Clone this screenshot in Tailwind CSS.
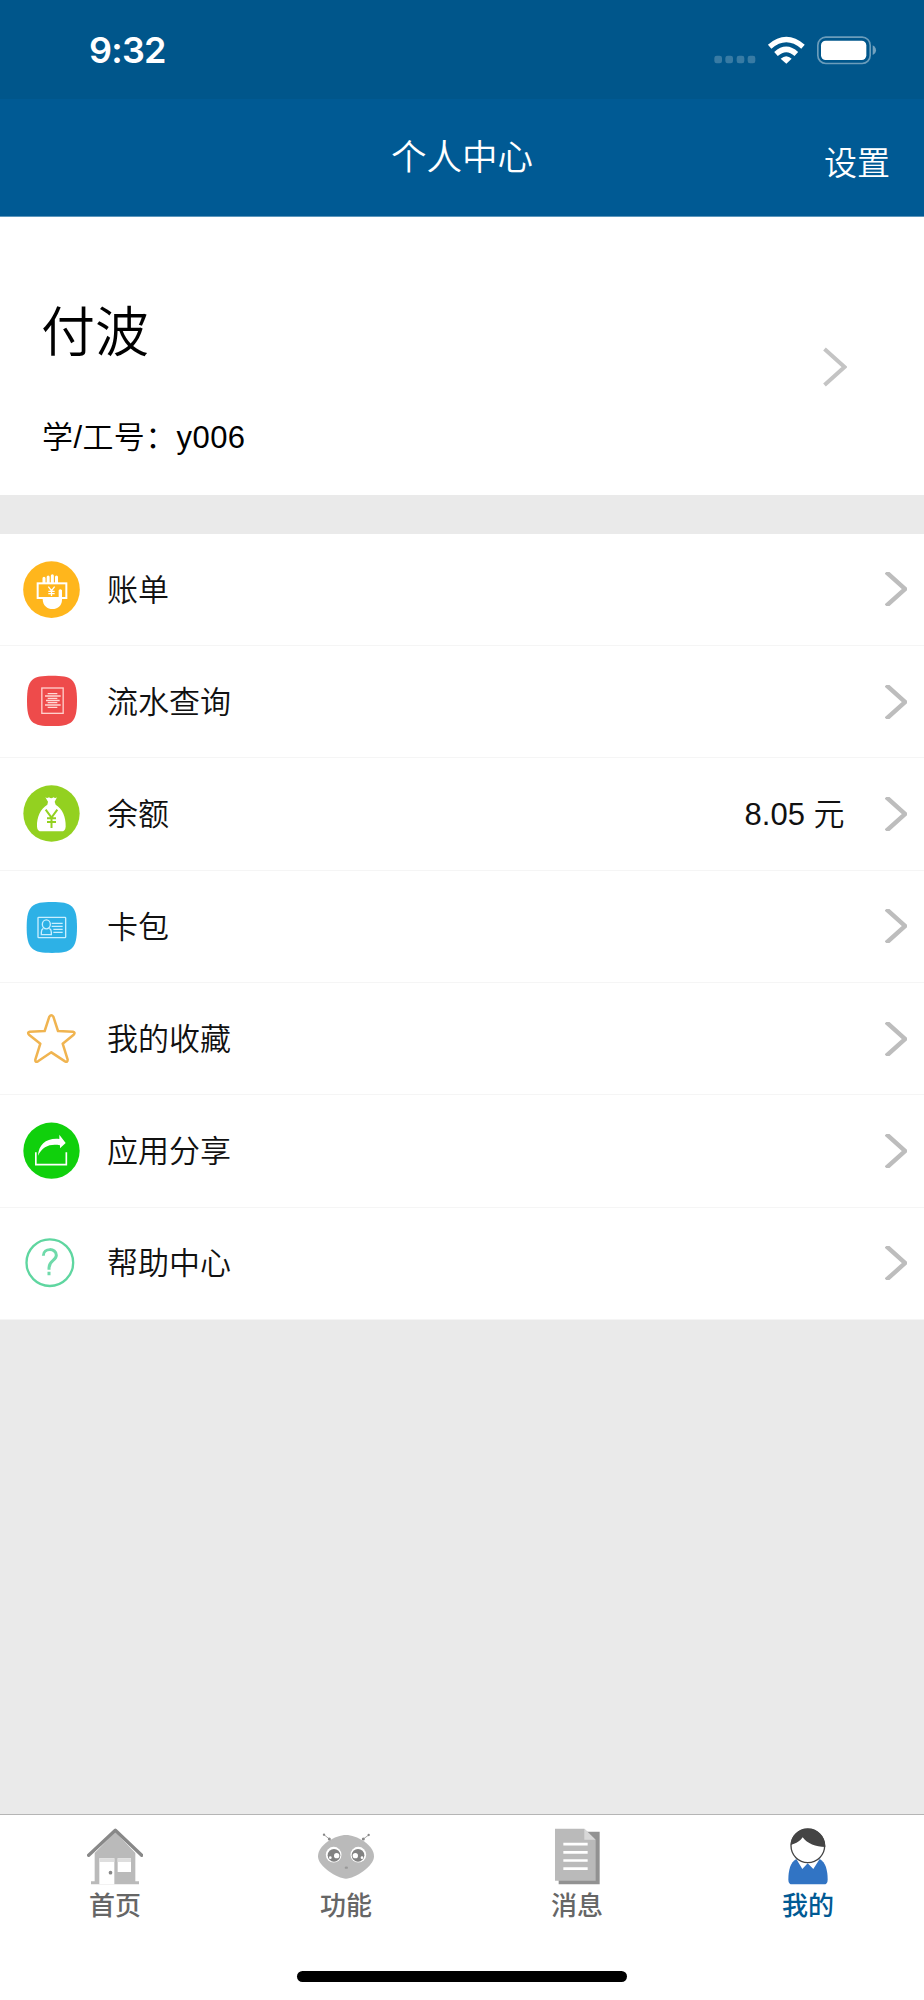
<!DOCTYPE html>
<html lang="zh-CN">
<head>
<meta charset="utf-8">
<title>个人中心</title>
<script src="https://cdn.jsdelivr.net/npm/@tailwindcss/browser@4"></script>
</head>
<body class="w-[924px] h-[2000px] flex flex-col overflow-hidden bg-[#eaeaea] text-black font-['Liberation_Sans','Noto_Sans_CJK_SC',sans-serif]">

<div class="h-[99px] shrink-0 bg-[#00568b] flex items-center pl-[89px] pr-[47px] pt-px justify-between">
  <span class="font-['Inter',sans-serif] font-semibold text-[36px] tracking-[-0.8px] leading-none text-white">9:32</span>
  <svg class="w-[164px] h-[30px]" viewBox="68 45 492 90">
    <g fill="#fff" fill-opacity=".22"><rect x="72" y="107" width="23" height="23" rx="7"/><rect x="105" y="107" width="23" height="23" rx="7"/><rect x="139" y="107" width="23" height="23" rx="7"/><rect x="172" y="107" width="23" height="23" rx="7"/></g>
    <g fill="none" stroke="#fff" stroke-width="16"><path d="M238 80Q288 37 338 80"/><path d="M257 102Q288 74 318 102"/></g>
    <path d="M271 116Q288 101 304 116L288 131Z" fill="#fff"/>
    <rect x="382.500" y="51.500" width="157" height="79" rx="24" fill="none" stroke="#fff" stroke-opacity=".42" stroke-width="5"/>
    <rect x="392" y="62" width="136" height="58" rx="14" fill="#fff"/>
    <path d="M547 76Q557 82 557 91T547 105Z" fill="#fff" fill-opacity=".45"/>
  </svg>
</div>

<header class="h-[118px] shrink-0 bg-[#005a94] border-b border-[#5c96bb] text-white grid grid-cols-3 items-center">
  <span></span>
  <h1 class="text-center text-[35.500px] leading-none font-[350] pt-[2px]">个人中心</h1>
  <span class="text-right text-[33px] leading-none font-[350] pr-[34px] pt-[11px]">设置</span>
</header>

<section class="h-[278px] shrink-0 bg-white flex items-center justify-between pl-[41px] pr-[77px]">
  <div class="flex flex-col gap-[62px] pt-[47px]">
    <h2 class="text-[54px] leading-none font-[350]">付波</h2>
    <p class="text-[31px] leading-none pl-px tracking-[0.4px] font-[350]">学/工号：y006</p>
  </div>
  <svg class="w-[24px] h-[40px] mt-[21px]" viewBox="0 0 24 40"><path d="M1.500 2L21.500 20L1.500 38" fill="none" stroke="#c4c4c4" stroke-width="4"/></svg>
</section>

<ul class="mt-[38.600px] shrink-0 bg-white text-[31px] leading-none font-[350] text-[#111]">
  <li class="h-[112.330px] border-b border-[#f5f5f5] flex items-center pl-[23px] pr-[17px]">
    <svg class="w-[57px] h-[57px] mr-[27px]" viewBox="69 62 171 171">
      <circle cx="154.500" cy="148" r="85" fill="#ffb61c"/>
      <path d="M132 114V130M144.500 110V130M157 106V130M169.500 110V130" stroke="#fff" stroke-width="9" stroke-linecap="round"/>
      <rect x="113" y="129" width="86" height="44" fill="#ffb61c" stroke="#fff" stroke-width="6"/>
      <path d="M128 173H176V150Q181 143 186 150V178C186 216 128 216 128 176Z" fill="#fff"/>
      <path d="M145 139L154.500 151L164 139M154.500 151V167M145 153H164M145 160H164" fill="none" stroke="#fff" stroke-width="4"/>
    </svg>
    <span class="flex-1 pt-[2px]">账单</span>
    <svg class="w-[22px] h-[34px]" viewBox="0 0 22 34"><path d="M0 0L19 17L0 34" transform="translate(1.200 0)" fill="none" stroke="#bdbdbd" stroke-width="4.400"/></svg>
  </li>
  <li class="h-[112.330px] border-b border-[#f5f5f5] flex items-center pl-[23px] pr-[17px]">
    <svg class="w-[57px] h-[57px] mr-[27px]" viewBox="69 399 171 171">
      <path d="M156 407C215 407 231 416 231 482S215 558 156 558S81 548 81 482S97 407 156 407Z" fill="#ee4b4b"/>
      <rect x="125.500" y="444" width="64" height="76" fill="none" stroke="#ffd0cc" stroke-width="4"/>
      <path d="M143 461H172M135 468H182M143 475H172M138 481.500H179M143 488H172M135 495H182M143 502H172" stroke="#ffd9d5" stroke-width="4"/>
    </svg>
    <span class="flex-1 pt-[2px]">流水查询</span>
    <svg class="w-[22px] h-[34px]" viewBox="0 0 22 34"><path d="M0 0L19 17L0 34" transform="translate(1.200 0)" fill="none" stroke="#bdbdbd" stroke-width="4.400"/></svg>
  </li>
  <li class="h-[112.330px] border-b border-[#f5f5f5] flex items-center pl-[23px] pr-[17px]">
    <svg class="w-[57px] h-[57px] mr-[27px]" viewBox="69 76 171 171">
      <circle cx="154.500" cy="161.500" r="84.500" fill="#93d120"/>
      <path d="M136 113Q141 117 147 113Q154 119 160 113Q166 117 171 113L164 126L167 135C187 147 198 171 197 201Q196 215 184 215H124Q112 215 111 201C110 171 122 147 142 135L144 126Z" fill="#fff"/>
      <path d="M137 150L154.500 174L172 150M154.500 173V205M141 176H168M141 187H168" fill="none" stroke="#93d120" stroke-width="6"/>
    </svg>
    <span class="flex-1 pt-[2px]">余额</span>
    <span class="mr-[40.500px] pt-[2px]">8.05 元</span>
    <svg class="w-[22px] h-[34px]" viewBox="0 0 22 34"><path d="M0 0L19 17L0 34" transform="translate(1.200 0)" fill="none" stroke="#bdbdbd" stroke-width="4.400"/></svg>
  </li>
  <li class="h-[112.330px] border-b border-[#f5f5f5] flex items-center pl-[23px] pr-[17px]">
    <svg class="w-[57px] h-[57px] mr-[27px]" viewBox="69 413 171 171">
      <path d="M156 425C215 425 231 435 231 501S215 578 156 578S80 567 80 501S97 425 156 425Z" fill="#2db1e6"/>
      <g fill="none" stroke="#c9efff" stroke-width="4"><rect x="114" y="471" width="83" height="61" rx="2"/>
      <ellipse cx="139" cy="492" rx="12" ry="13.500"/><path d="M130 504Q124 507 124 516V523H154V516Q154 507 148 504"/><path d="M155 489H188M155 498H188M160 507H188M160 516H188"/></g>
    </svg>
    <span class="flex-1 pt-[2px]">卡包</span>
    <svg class="w-[22px] h-[34px]" viewBox="0 0 22 34"><path d="M0 0L19 17L0 34" transform="translate(1.200 0)" fill="none" stroke="#bdbdbd" stroke-width="4.400"/></svg>
  </li>
  <li class="h-[112.330px] border-b border-[#f5f5f5] flex items-center pl-[23px] pr-[17px]">
    <svg class="w-[57px] h-[57px] mr-[27px]" viewBox="69 90 171 171">
      <path d="M148 110Q154 102 160 110L174 153L219 155Q227 157 221 164L188 191L203 239Q203 248 195 244L154 217L114 244Q105 248 106 239L121 191L87 164Q81 157 89 155L134 153Z" fill="none" stroke="#f0b450" stroke-width="7.500" stroke-linejoin="round"/>
    </svg>
    <span class="flex-1 pt-[2px]">我的收藏</span>
    <svg class="w-[22px] h-[34px]" viewBox="0 0 22 34"><path d="M0 0L19 17L0 34" transform="translate(1.200 0)" fill="none" stroke="#bdbdbd" stroke-width="4.400"/></svg>
  </li>
  <li class="h-[112.330px] border-b border-[#f5f5f5] flex items-center pl-[23px] pr-[17px]">
    <svg class="w-[57px] h-[57px] mr-[27px]" viewBox="69 427 171 171">
      <circle cx="154.500" cy="513" r="84.500" fill="#10d00c"/>
      <path d="M107.500 518V555H199V518" fill="none" stroke="#fff" stroke-width="5"/>
      <path d="M114 528C116 494 140 474 178 478V465L197 490L180 506V497C150 492 128 500 114 528Z" fill="#fff"/>
    </svg>
    <span class="flex-1 pt-[2px]">应用分享</span>
    <svg class="w-[22px] h-[34px]" viewBox="0 0 22 34"><path d="M0 0L19 17L0 34" transform="translate(1.200 0)" fill="none" stroke="#bdbdbd" stroke-width="4.400"/></svg>
  </li>
  <li class="h-[112.330px] border-b border-[#f5f5f5] flex items-center pl-[23px] pr-[17px]">
    <svg class="w-[57px] h-[57px] mr-[27px]" viewBox="69 764 171 171">
      <circle cx="149.500" cy="847" r="70" fill="none" stroke="#5fd6a0" stroke-width="7"/>
      <path d="M130 826C130 802 169 802 169 825C169 841 147 840 147 862V868M147 874V885" fill="none" stroke="#6fdaaa" stroke-width="9"/>
    </svg>
    <span class="flex-1 pt-px">帮助中心</span>
    <svg class="w-[22px] h-[34px]" viewBox="0 0 22 34"><path d="M0 0L19 17L0 34" transform="translate(1.200 0)" fill="none" stroke="#bdbdbd" stroke-width="4.400"/></svg>
  </li>
</ul>

<footer class="mt-auto h-[186px] shrink-0 bg-white border-t border-[#b5b5b5] flex flex-col justify-between items-center pb-[18px]">
  <nav class="w-full grid grid-cols-4 justify-items-center pt-[13px] text-[26px] leading-none font-medium text-[#666]">
    <a class="flex flex-col items-center gap-[8px] pr-px">
      <svg class="w-[56px] h-[57px]" viewBox="83 85 168 171">
        <path d="M106 160L168 97L228 160V245H239V254H95V245H106Z" fill="#bababa"/>
        <path d="M120 176H165V254H120ZM175 176H215V217H175Z" fill="#fff"/>
        <path d="M120 176H165V187H120ZM175 176H215V187H175Z" fill="#dedede"/>
        <path d="M88 167L168 92L247 167" fill="none" stroke="#888" stroke-width="10" stroke-linecap="round" stroke-linejoin="round"/>
        <circle cx="153.500" cy="219" r="5.500" fill="#888"/>
      </svg>
      <span>首页</span>
    </a>
    <a class="flex flex-col items-center gap-[8px] pr-px">
      <svg class="w-[56px] h-[57px]" viewBox="775 85 168 171">
        <path d="M859 106C890 106 943 135 943 170C943 201 885 237 859 237S775 201 775 170C775 135 828 106 859 106Z" fill="#bababa"/>
        <path d="M793 105L809 118M927 106L911 118" stroke="#aaa" stroke-width="3"/>
        <g fill="#888"><circle cx="793" cy="105" r="3.500"/><circle cx="809" cy="118" r="4.500"/><circle cx="927" cy="106" r="3.500"/><circle cx="911" cy="118" r="4.500"/></g>
        <circle cx="822" cy="165" r="23.500" fill="#fff"/><circle cx="896" cy="165" r="23.500" fill="#fff"/>
        <circle cx="823" cy="167" r="19" fill="#828282"/><circle cx="895" cy="167" r="19" fill="#828282"/>
        <g fill="#fff"><circle cx="831" cy="168" r="8"/><circle cx="887" cy="168" r="8"/><circle cx="812" cy="174" r="4"/><circle cx="907" cy="174" r="4"/></g>
        <ellipse cx="860" cy="204" rx="5" ry="3.500" fill="#999"/>
      </svg>
      <span>功能</span>
    </a>
    <a class="flex flex-col items-center gap-[8px] pr-px">
      <svg class="w-[56px] h-[57px]" viewBox="88 85 168 171">
        <path d="M117 96H240V254H117Z" fill="#929292"/>
        <path d="M106 87H194L228 121V243H106Z" fill="#bababa"/>
        <path d="M194 87L228 120H194Z" fill="#d8d8d8"/>
        <path d="M131 133.500H204M131 158H204M131 182.500H204M131 207H204" stroke="#fff" stroke-width="8"/>
      </svg>
      <span>消息</span>
    </a>
    <a class="flex flex-col items-center gap-[8px] pr-px text-[#005a94]">
      <svg class="w-[56px] h-[57px]" viewBox="781 85 168 171">
        <path d="M830 178C812 188 806 212 806 240Q806 254 818 254H912Q924 254 924 240C924 212 918 188 900 178Z" fill="#3174c4"/>
        <path d="M830 178L848 208L864 191L881 208L900 178Z" fill="#fff"/>
        <circle cx="864.500" cy="138.500" r="50.500" fill="#fff" stroke="#444" stroke-width="4"/>
        <path d="M813 136C814 106 837 87 864 87C892 87 917 108 917 142C888 142 863 132 849 113C842 124 831 131 813 136Z" fill="#444"/>
      </svg>
      <span>我的</span>
    </a>
  </nav>
  <div class="w-[330px] h-[11px] rounded-full bg-black"></div>
</footer>
</body>
</html>
